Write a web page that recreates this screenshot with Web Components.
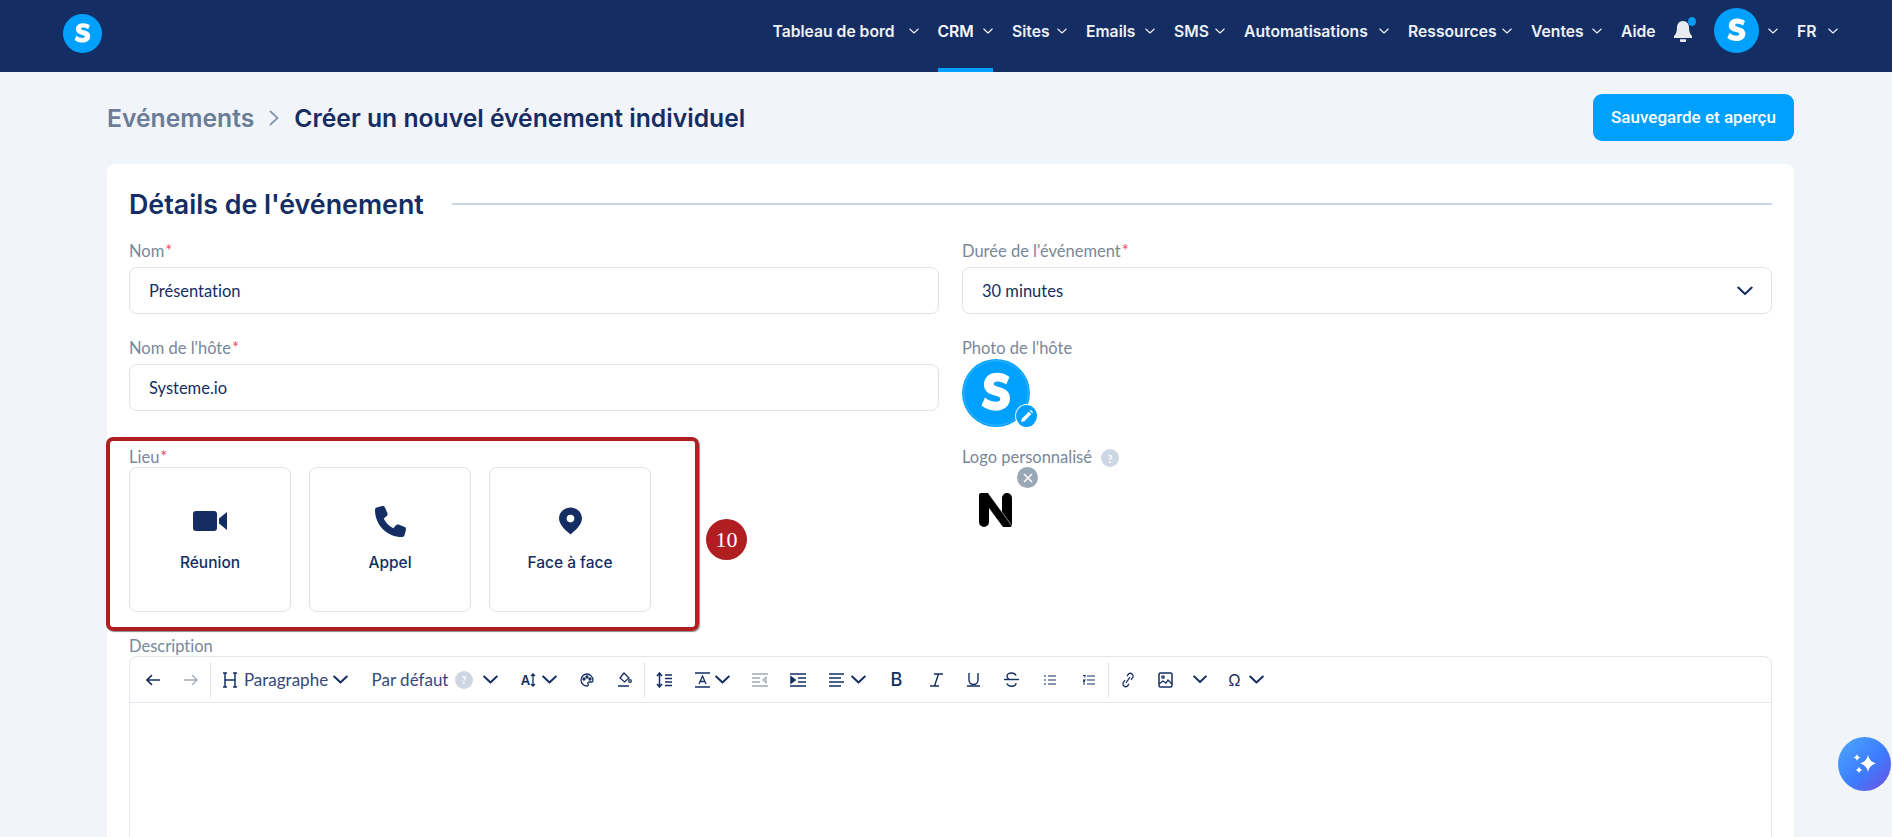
<!doctype html>
<html lang="fr"><head><meta charset="utf-8"><title>Créer un nouvel événement</title>
<style>
html,body{margin:0;height:837px;overflow:hidden;background:#f1f4f9;font-family:Lato,"Noto Sans",sans-serif;font-variant-ligatures:none}
</style></head>
<body>
<app-nav></app-nav>
<page-head></page-head>
<event-card></event-card>
<ai-fab></ai-fab>
<script>
const NAVY='#142e63';
const chev=(w=10,sw=1.1,c='currentColor')=>`<svg width="${w}" height="${w*0.6}" viewBox="0 0 10 6" fill="none" stroke="${c}" stroke-width="${sw}" stroke-linecap="round" stroke-linejoin="round"><path d="M.8 1l4.200 4 4.200-4"/></svg>`;
const logoS=(size,ring)=>`<svg width="${size}" height="${size}" viewBox="0 0 40 40"><circle cx="20" cy="20" r="20" fill="#00a0ff"/>${ring?'<circle cx="20" cy="20" r="19" fill="none" stroke="#fff" stroke-opacity=".55" stroke-width=".25"/>':''}<path ${ring?'transform="translate(20 20) scale(1.04 1.12) translate(-20 -20)"':''} d="M27.600 11.600c-1.900-1.400-4.400-2.200-7-2.200-4.300 0-7.400 2.500-7.400 6.100 0 3.100 2 4.700 5.700 5.700 2.700.7 3.500 1.100 3.500 2 0 .9-.9 1.400-2.400 1.400-2 0-4.300-.8-6.200-2.300l-2 4.300c2.200 1.700 5.100 2.700 8.100 2.700 4.700 0 8-2.500 8-6.500 0-3.200-2-4.800-5.900-5.800-2.500-.6-3.300-1-3.300-1.800 0-.8.7-1.300 2-1.300 1.700 0 3.500.6 5.100 1.700z" fill="#fff"/></svg>`;

class AppNav extends HTMLElement{constructor(){super();const r=this.attachShadow({mode:'open'});
const items=[['Tableau de bord',127,1],['CRM',36.500,1,1],['Sites',36,1],['Emails',50,1],['SMS',32,1],['Automatisations',126,1],['Ressources',85,1],['Ventes',52,1],['Aide',34,0]];
r.innerHTML=`<style>
:host{display:flex;height:72px;background:${NAVY};color:#eef1f6;align-items:stretch;padding-left:63px;padding-right:54px;font:600 15.700px Inter,sans-serif;font-variant-ligatures:none;box-sizing:border-box}
.logo{align-self:center;display:flex;margin-top:-6px}
.links{margin-left:auto;display:flex;align-items:stretch;gap:19px}
.it{display:flex;align-items:center;gap:9px;position:relative;padding-bottom:10px;white-space:nowrap;box-sizing:border-box}
.it span{display:block}
.it svg{flex:none}
.on{color:#fff}
.on::after{content:"";position:absolute;left:0;right:0;bottom:0;height:4px;background:#00a0ff}
.bell{position:relative;display:flex;align-items:center;padding-bottom:10px;margin-right:3px}
.bell i{position:absolute;width:8px;height:9px;border-radius:50%;background:#0a9bf5;right:-4px;top:17px}
.av{padding-bottom:11px}
</style>
<div class="logo">${logoS(39)}</div>
<div class="links">
${items.map(i=>`<div class="it ${i[3]?'on':''}"><span style="width:${i[1]}px">${i[0]}</span>${i[2]?chev():''}</div>`).join('')}
<div class="bell"><svg width="18" height="21" viewBox="0 0 18 21" fill="#e8ebf0"><path d="M9 0c4 0 6 3 6 6.500 0 4 1 6.500 3 8.500v2H0v-2c2-2 3-4.500 3-8.500C3 3 5 0 9 0zM6 18.200h6V20c0 .6-.4 1-1 1H7c-.6 0-1-.4-1-1z"/></svg><i></i></div>
<div class="it av">${logoS(45)}${chev()}</div>
<div class="it"><span style="width:22px">FR</span>${chev()}</div>
</div>`}}
customElements.define('app-nav',AppNav);

class PageHead extends HTMLElement{constructor(){super();this.attachShadow({mode:'open'}).innerHTML=`<style>
:host{display:flex;align-items:center;height:92px;padding:0 98px 0 107px;font:600 24.700px Inter,sans-serif;color:${NAVY};box-sizing:border-box}
.a{color:#6a7c96}
svg{margin:0 15px}
.b{flex:1}
button{all:unset;box-sizing:border-box;width:201px;height:47px;line-height:47px;border-radius:9px;background:#00a0ff;color:#fff;font:500 17px/47px Roboto,sans-serif;text-align:center;margin-top:-2px}
</style><span class="a">Evénements</span><svg width="10" height="16" viewBox="0 0 10 16" fill="none" stroke="#8897ab" stroke-width="1.800"><path d="M1 1l7.500 7L1 15"/></svg><span class="b">Créer un nouvel événement individuel</span><button>Sauvegarde et aperçu</button>`}}
customElements.define('page-head',PageHead);

class FormField extends HTMLElement{constructor(){super();
const req=this.hasAttribute('required');
this.attachShadow({mode:'open'}).innerHTML=`<style>
:host{display:block;font-family:Lato,sans-serif}
.l{display:flex;align-items:flex-start;height:23px;font-size:16.500px;line-height:14px;color:#7a8799}
.l b{color:#f0506e;font-weight:400;margin-left:1px}
</style><div class="l"><span>${this.getAttribute('label')}</span>${req?'<b>*</b>':''}<slot name="hint"></slot></div><slot></slot>`}}
customElements.define('form-field',FormField);

class TextBox extends HTMLElement{constructor(){super();
this.attachShadow({mode:'open'}).innerHTML=`<style>
:host{display:flex;align-items:center;justify-content:space-between;height:47px;box-sizing:border-box;border:1px solid #dfe3e9;border-radius:8px;padding:0 18px 0 19px;font:400 16.500px Lato,sans-serif;font-variant-ligatures:none;color:${NAVY};background:#fff}
</style><slot></slot>${this.hasAttribute('select')?chev(16,1.3,NAVY):''}`}}
customElements.define('text-box',TextBox);

class PlaceOpt extends HTMLElement{constructor(){super();
this.attachShadow({mode:'open'}).innerHTML=`<style>
:host{display:flex;flex-direction:column;align-items:center;width:162px;height:145px;box-sizing:border-box;border:1px solid #dfe3e8;border-radius:8px;padding-top:37px;font:500 15.500px Inter,sans-serif;color:${NAVY};background:#fff}
.i{height:32px;display:flex;align-items:center;justify-content:center}
.t{margin-top:15px;line-height:22px}
</style><div class="i"><slot></slot></div><div class="t">${this.getAttribute('label')}</div>`}}
customElements.define('place-opt',PlaceOpt);

class HelpDot extends HTMLElement{constructor(){super();
this.attachShadow({mode:'open'}).innerHTML=`<style>
:host{display:inline-flex;align-items:center;justify-content:center;width:18px;height:18px;border-radius:50%;background:#cdd6e3;color:#fff;font:700 11px Lato,sans-serif;flex:none}
</style>?`}}
customElements.define('help-dot',HelpDot);

const I=(w,h,body,sw=1.3,c=NAVY)=>`<svg width="${w}" height="${h}" viewBox="0 0 ${w} ${h}" fill="none" stroke="${c}" stroke-width="${sw}">${body}</svg>`;
class RichToolbar extends HTMLElement{constructor(){super();
const dis='#a3abb8';
const c=(ml,w=15)=>`<span class="c" style="margin-left:${ml}px;width:${w}px">${chev(w,1.8/ (w/10) * 1.1,NAVY)}</span>`;
const it=(ml,w,html)=>`<span class="g" style="margin-left:${ml}px;width:${w}px">${html}</span>`;
const sep=(ml)=>`<span class="s" style="margin-left:${ml}px"></span>`;
this.attachShadow({mode:'open'}).innerHTML=`<style>
:host{display:flex;align-items:center;height:46px;box-sizing:border-box;border-bottom:1px solid #e1e7ec;padding-left:16px;font:400 17px Lato,sans-serif;font-variant-ligatures:none;color:#34497a;white-space:nowrap}
.g,.c{display:flex;align-items:center;flex:none;justify-content:center}
.s{width:1px;height:36px;background:#e1e6ea;flex:none}
</style>
${it(0,14,I(14,12,'<path d="M14 6H1M6 1L1 6l5 5"/>',1.7))}
${it(24,14,I(14,12,'<path d="M0 6h13M8 1l5 5-5 5"/>',1.4,dis))}
${sep(12)}
${it(11,16,I(16,16,'<path d="M3 1v14M13 1v14M3 8h10M1 1h4M1 15h4M11 1h4M11 15h4"/>',1.5))}
${it(6,84,'<span>Paragraphe</span>')}
${c(5)}
${it(24,76,'<span>Par défaut</span>')}
${it(7,18,'<help-dot></help-dot>')}
${c(10)}
${it(22,17,`<span style="font:600 13px Inter;color:${NAVY}">A</span>`+I(6,14,'<path d="M3 1v12M1 3l2-2 2 2M1 11l2 2 2-2"/>'))}
${c(5)}
${it(23,14,I(14,14,'<path d="M7 1a6 6 0 100 12c1.500 0 1.500-1 1-2s0-2 1.500-2H12c1 0 1-1 1-2 0-3-3-6-6-6z"/><circle cx="4" cy="6" r="1" fill="'+NAVY+'"/><circle cx="7" cy="4" r="1" fill="'+NAVY+'"/><circle cx="10" cy="6" r="1" fill="'+NAVY+'"/>'))}
${it(23,15,I(15,15,'<path d="M7 1l5 5-4.500 4L3 6zM1 14h11"/><circle cx="13" cy="9" r="1.300"/>'))}
${sep(12)}
${it(11,16,I(16,16,'<path d="M3.500 1v14M1 4l2.500-3L6 4M1 12l2.500 3L6 12M9 3h7M9 6.500h7M9 10h7M9 13.500h7"/>',1.500))}
${it(23,15,I(15,16,'<path d="M0 1h15M0 15h15" stroke-width="1.600"/><path d="M4 12L7.500 4 11 12M5 9.500h5"/>'))}
${c(5)}
${it(22,16,I(16,14,'<path d="M0 1h16M0 13h16M0 5h8M0 9h8M14 4.500L11 7l3 2.500z"/>',1.3,dis))}
${it(22,16,I(16,14,'<path d="M0 1h16M0 13h16M8 5h8M8 9h8"/><path d="M1 4l4 3-4 3z" fill="'+NAVY+'"/>',1.6))}
${it(23,15,I(15,14,'<path d="M0 1h15M0 5h12M0 9h15M0 13h12"/>'))}
${c(7)}
${it(24,13,`<span style="font:500 18px Inter;color:${NAVY}">B</span>`)}
${it(27,13,I(13,14,'<path d="M4 1h9M0 13h9M8.500 1L4.500 13"/>',1.4))}
${it(24,13,I(13,15,'<path d="M2 1v7a4.500 4.500 0 009 0V1" stroke-width="1.400"/><path d="M0 14h13" stroke-width="1.500"/>'))}
${it(24,15,I(15,15,'<path d="M0 7.500h15"/><path d="M12 3.500C11 1.500 9.500 1 7.500 1 5 1 3 2 3 4c0 1.300.6 2.500 2 3.500M12 11c0 2-2 3.200-4.500 3.200-2 0-3.800-.7-4.700-2.700"/>',1.4))}
${it(25,12,I(12,12,'<path d="M4 2h8M4 6h8M4 10h8M0 2h2M0 6h2M0 10h2" />',1.200))}
${it(27,12,I(12,12,'<path d="M4 2h8M4 6h8M4 10h8M0 1.500h2v2M0 6h2L0 8h2M0 10h2"/>',1.100))}
${sep(13)}
${it(12,14,I(14,16,'<path d="M6 4l2-2.500a3 3 0 014 3.500L10 8M8 12l-2 2.500a3 3 0 01-4-3.500L4 8M5 11l4-6"/>'))}
${it(23,15,I(15,16,'<rect x="1" y="1" width="13" height="14" rx="1.500" stroke-width="1.500"/><circle cx="5" cy="5" r="1.200"/><path d="M1 12l4-3 3 2 2-3 4 4"/>'))}
${c(20,14)}
${it(21,13,`<span style="font:400 16px Inter;color:${NAVY}">Ω</span>`)}
${c(8)}`}}
customElements.define('rich-toolbar',RichToolbar);

class EventCard extends HTMLElement{constructor(){super();
this.attachShadow({mode:'open'}).innerHTML=`<style>
:host{display:block;position:relative;margin:0 98px 0 107px;height:700px;background:#fff;border-radius:8px;padding:0 22px;box-sizing:border-box;color:${NAVY}}
h2{margin:0;display:flex;align-items:center;gap:28px;height:80px;font:600 26.800px Inter,sans-serif;color:${NAVY}}
h2::after{content:"";flex:1;height:2px;background:#c9d4e3}
.grid{display:grid;grid-template-columns:1fr 1fr;column-gap:23px;row-gap:27px}
.grid2{display:grid;grid-template-columns:1fr 1fr;column-gap:23px;margin-top:23px}
.lieu{display:flex;gap:18px;margin-top:-6px}
.photo{position:relative;width:75px;height:68px;margin-top:-5px}
.edit{position:absolute;right:0;bottom:0;width:21px;height:22px;border-radius:50%;background:#00a0ff;box-shadow:0 0 0 1px #fff;display:flex;align-items:center;justify-content:center}
.logo{position:relative;width:60px;height:60px;margin-top:-6px}
.x{position:absolute;left:55px;top:0;width:21px;height:21px;border-radius:50%;background:#9aa7b4;display:flex;align-items:center;justify-content:center}
.hint{margin-left:9px;margin-top:-1px}
.n{position:absolute;left:17px;top:26px}
.ed{display:block;margin-top:-6px;height:400px;border:1px solid #e1e7ec;border-radius:8px}
.desc{margin-top:27px}
.frame{position:absolute;left:-1.500px;top:272.500px;width:593.500px;height:194px;box-sizing:border-box;border:4px solid #b01e22;border-radius:7px;box-shadow:1px 1px 1px #8a8a8a;pointer-events:none}
.badge{position:absolute;left:599px;top:355px;width:41px;height:41px;border-radius:50%;background:#b01e22;color:#fff;display:flex;align-items:center;justify-content:center;font:22px "Liberation Serif",serif}
</style>
<h2>Détails de l'événement</h2>
<div class="grid">
<form-field label="Nom" required><text-box>Présentation</text-box></form-field>
<form-field label="Durée de l'événement" required><text-box select>30 minutes</text-box></form-field>
<form-field label="Nom de l'hôte" required><text-box>Systeme.io</text-box></form-field>
<form-field label="Photo de l'hôte"><div class="photo">${logoS(68,1)}<span class="edit"><svg width="12" height="12" viewBox="0 0 12 12" fill="#fff"><path d="M0 12l.8-3.300L7.800 1.700l2.500 2.500-7 7zM8.700.8l.7-.6c.3-.2.700-.2.900 0l1.500 1.500c.2.200.2.600 0 .900l-.7.700z"/></svg></span></div></form-field>
</div>
<div class="grid2">
<form-field label="Lieu" required><div class="lieu">
<place-opt label="Réunion"><svg width="34" height="20" viewBox="0 0 34 20" fill="${NAVY}"><rect width="24" height="20" rx="3"/><path d="M26 7.500L34 1v18l-8-6.500z"/></svg></place-opt>
<place-opt label="Appel"><svg width="31" height="31" viewBox="0 0 512 512" fill="${NAVY}"><path d="M164.900 24.600c-7.700-18.600-28-28.500-47.400-23.200l-88 24C12.100 30.200 0 46 0 64c0 247.400 200.600 448 448 448 18 0 33.800-12.100 38.600-29.500l24-88c5.300-19.400-4.600-39.700-23.200-47.400l-96-40c-16.300-6.800-35.200-2.100-46.300 11.600L304.700 368C234.300 334.700 177.300 277.700 144 207.300l49.300-40.400c13.700-11.200 18.400-30 11.600-46.300z"/></svg></place-opt>
<place-opt label="Face à face"><svg width="23" height="28" viewBox="0 0 24 28"><path fill="${NAVY}" fill-rule="evenodd" d="M12 0c6.600 0 12 5 12 11.500C24 18 16 25 12 28 8 25 0 18 0 11.500 0 5 5.400 0 12 0zm0 7.500a4 4 0 100 8 4 4 0 000-8z"/></svg></place-opt>
</div></form-field>
<form-field label="Logo personnalisé"><help-dot slot="hint" class="hint"></help-dot><div class="logo"><span class="x"><svg width="10" height="10" viewBox="0 0 10 10" stroke="#fff" stroke-width="1.500"><path d="M1 1l8 8M9 1l-8 8"/></svg></span><svg class="n" width="33" height="34" viewBox="0 0 33 34"><path d="M0 2a2 2 0 012-2h7l14 19V5a5 5 0 0110 0v27a2 2 0 01-2 2h-7L10 15v14a5 5 0 01-10 0z" fill="#000"/><path d="M10 1l23 32" stroke="#fff" stroke-width=".5"/></svg></div></form-field>
</div>
<div class="desc"><form-field label="Description"><div class="ed"><rich-toolbar></rich-toolbar></div></form-field></div>
<div class="frame"></div><div class="badge">10</div>`}}
customElements.define('event-card',EventCard);

class AiFab extends HTMLElement{constructor(){super();
this.attachShadow({mode:'open'}).innerHTML=`<style>
:host{position:fixed;left:1838px;top:737px;width:53px;height:54px;border-radius:50%;background:linear-gradient(135deg,#4ea9fb 0%,#3c7cff 55%,#7150dc 100%);display:flex;align-items:center;justify-content:center}
</style><svg width="26" height="26" viewBox="0 0 26 26" fill="#fff"><path d="M16 4c1 4 3 7 8 8.500-5 1.500-7 4-8 8.500-1-4.500-3-7-8-8.500 5-1.500 7-4.500 8-8.500zM5 3c.5 2 1.500 3 3.500 3.500C6.500 7 5.500 8 5 10c-.5-2-1.500-3-3.500-3.500C3.500 6 4.500 5 5 3zM7 15.500c.5 2 1.500 3 3.500 3.500-2 .5-3 1.500-3.500 3.500-.5-2-1.500-3-3.500-3.500 2-.5 3-1.500 3.500-3.500z"/></svg>`}}
customElements.define('ai-fab',AiFab);
</script>
</body></html>
